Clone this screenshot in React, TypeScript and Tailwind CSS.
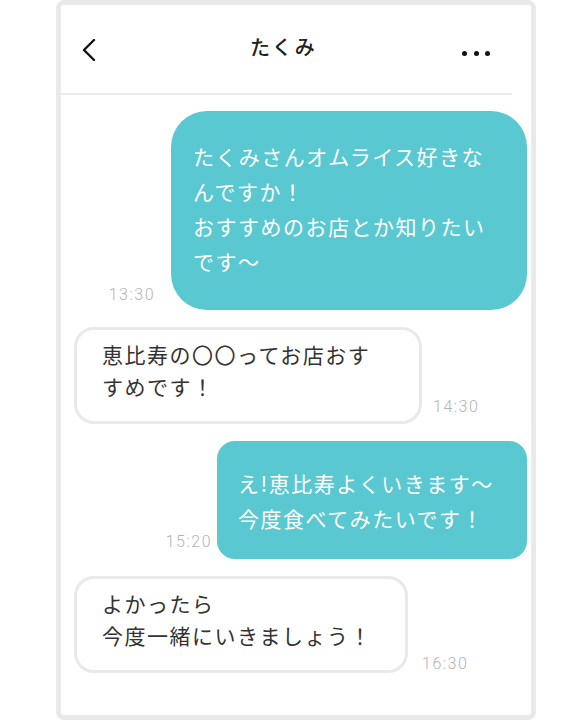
const jp = { fontFamily: '"Noto Sans CJK JP", "Noto Sans", sans-serif' };
const num = { fontFamily: 'Roboto, "Liberation Sans", sans-serif' };

function Time({ t, className }: { t: string; className: string }) {
  return (
    <span
      style={num}
      className={`text-[16px] leading-none font-light tracking-[1.5px] text-[#b3b3b3] ${className}`}
    >
      {t}
    </span>
  );
}

export default function App() {
  return (
    <div className="w-[570px] h-[723px] bg-white">
      {/* Phone frame */}
      <div className="ml-[56px] w-[480px] h-[720px] border-[5px] border-[#e9e9e9] rounded-[8px] flex flex-col">
        {/* Header */}
        <div className="h-[88px] flex items-center" style={jp}>
          <svg width="14" height="22" viewBox="0 0 14 22" className="ml-[21px] mt-[2px]">
            <polyline
              points="12,1 2,11 12,21"
              fill="none"
              stroke="#111"
              strokeWidth="2.4"
              strokeLinecap="round"
              strokeLinejoin="round"
            />
          </svg>
          <span className="ml-[154px] -mt-[4px] text-[20px] font-medium tracking-[2px] text-[#222]">
            たくみ
          </span>
          <div className="ml-auto mr-[41px] mt-[8px] flex gap-[6.5px]">
            <span className="w-[5px] h-[5px] rounded-full bg-[#111]" />
            <span className="w-[5px] h-[5px] rounded-full bg-[#111]" />
            <span className="w-[5px] h-[5px] rounded-full bg-[#111]" />
          </div>
        </div>
        <div className="h-[2px] bg-[#ebebeb] mr-[19px]" />

        {/* Messages */}
        <div className="flex flex-col gap-[17px] pt-[16px] pl-[13px] pr-[4px]" style={jp}>
          <div className="flex justify-end items-end gap-[16px]">
            <Time t="13:30" className="mb-[7px]" />
            <div className="w-[356px] rounded-[36px] bg-[#5ac8d0] pt-[28px] pb-[31px] pl-[22px] text-white text-[21px] leading-[35px] tracking-[1.5px] whitespace-nowrap">
              たくみさんオムライス好きな
              <br />
              んですか！
              <br />
              おすすめのお店とか知りたい
              <br />
              です〜
            </div>
          </div>

          <div className="flex items-end gap-[11px]">
            <div className="w-[348px] rounded-[20px] border-[3px] border-[#e9e9e9] bg-white pt-[8px] pb-[19px] pl-[25px] text-[#333] text-[21px] leading-[32px] tracking-[1.5px] whitespace-nowrap">
              恵比寿の〇〇ってお店おす
              <br />
              すめです！
            </div>
            <Time t="14:30" className="mb-[9px]" />
          </div>

          <div className="flex justify-end items-end gap-[5px]">
            <Time t="15:20" className="mb-[9px]" />
            <div className="w-[310px] rounded-[18px] bg-[#5ac8d0] pt-[25px] pb-[23px] pl-[21px] text-white text-[21px] leading-[35px] tracking-[1.5px] whitespace-nowrap">
              え!恵比寿よくいきます〜
              <br />
              今度食べてみたいです！
            </div>
          </div>

          <div className="flex items-end gap-[14px]">
            <div className="w-[334px] rounded-[20px] border-[3px] border-[#e9e9e9] bg-white pt-[8px] pb-[19px] pl-[25px] text-[#333] text-[21px] leading-[32px] tracking-[1.5px] whitespace-nowrap">
              よかったら
              <br />
              今度一緒にいきましょう！
            </div>
            <Time t="16:30" className="mb-[1px]" />
          </div>
        </div>
      </div>
    </div>
  );
}
